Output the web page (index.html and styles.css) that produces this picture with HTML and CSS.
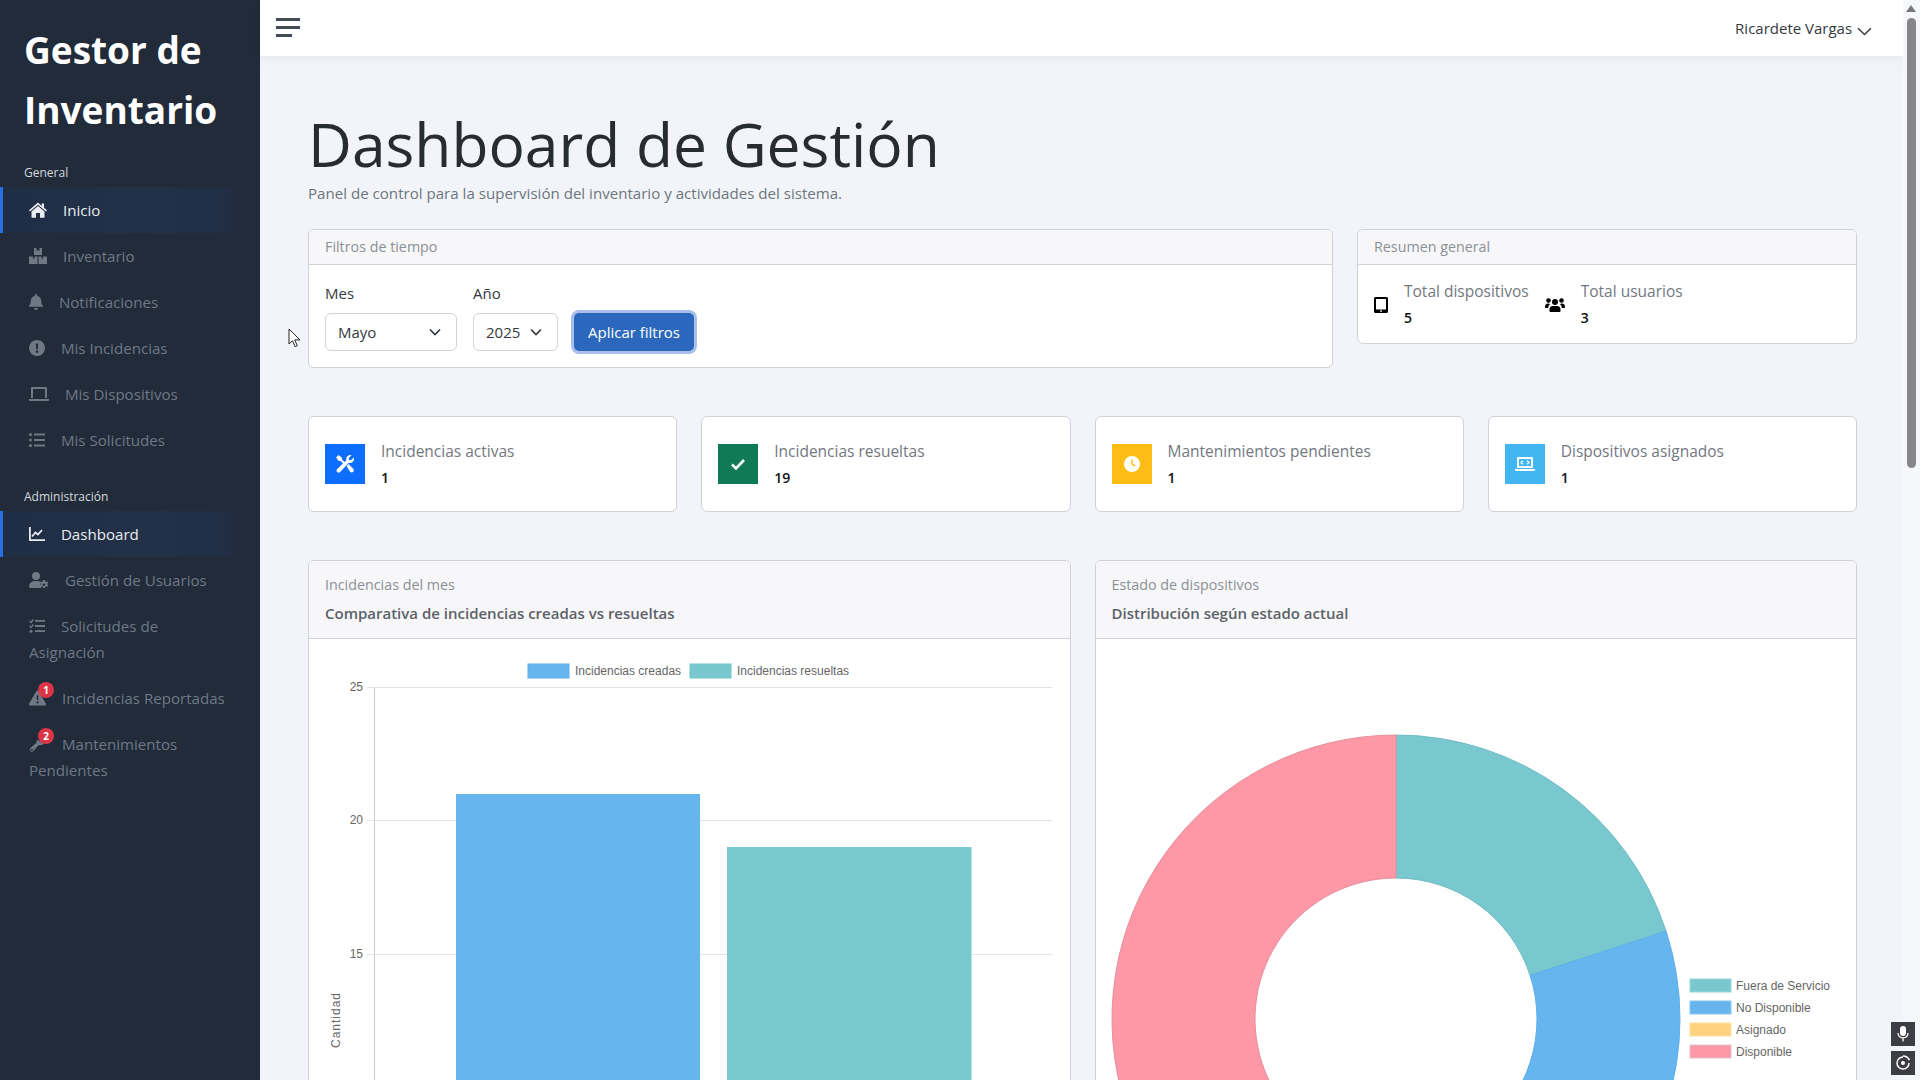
FILE: index.html
```html
<!doctype html>
<html lang="es">
<head>
<meta charset="utf-8">
<title>Dashboard de Gestión</title>
<link rel="stylesheet" href="styles.css">
</head>
<body>
<div class="app">

<aside class="sidebar">
  <div class="brand">Gestor de Inventario</div>

  <div class="nav-label">General</div>
  <a class="nav-item active"><svg class="ic" width="18" height="16" viewBox="0 0 18 16"><path d="M9 .6 0 8.2l1 1.2L9 2.7l8 6.7 1-1.2-3-2.5V1.400h-2.300v2.500z"/><path d="M9 4 2.500 9.500V15c0 .5.3.8.8.8h3.700v-4.800h4v4.800h3.700c.5 0 .8-.3.8-.8V9.500z"/></svg> Inicio</a>
  <a class="nav-item"><svg class="ic" width="18" height="16" viewBox="0 0 18 16"><path d="M5 0h2.500v2.500h3V0H13v7H5zM0 8.500h4v2h1.500v-2h3V16H0zM9.500 8.500h3v2H14v-2h4V16H9.500z"/></svg> Inventario</a>
  <a class="nav-item"><svg class="ic" width="14" height="16" viewBox="0 0 14 16"><path d="M7 0c.6 0 1 .4 1 1v.7c2.500.5 4.200 2.500 4.200 5 0 3.300 1.200 4.400 1.800 5.200v.9H0v-.9c.6-.8 1.800-1.900 1.800-5.200 0-2.500 1.700-4.500 4.200-5V1c0-.6.4-1 1-1zM5 14h4c0 1.100-.9 2-2 2s-2-.9-2-2z"/></svg> Notificaciones</a>
  <a class="nav-item"><svg class="ic" width="16" height="16" viewBox="0 0 16 16"><path fill-rule="evenodd" d="M8 0a8 8 0 1 1 0 16A8 8 0 0 1 8 0zM6.900 3.500l.3 6h1.600l.3-6zM8 10.500a1.300 1.300 0 1 0 0 2.600 1.300 1.300 0 0 0 0-2.600z"/></svg> Mis Incidencias</a>
  <a class="nav-item"><svg class="ic" width="20" height="16" viewBox="0 0 20 16"><path fill-rule="evenodd" d="M3 1h14c.6 0 1 .4 1 1v10h-2V3H4v9H2V2c0-.6.4-1 1-1zM0 13h20v1c0 .6-.5 1-1 1H1c-.5 0-1-.4-1-1z"/></svg> Mis Dispositivos</a>
  <a class="nav-item"><svg class="ic" width="16" height="16" viewBox="0 0 16 16"><circle cx="1.500" cy="2.500" r="1.500"/><circle cx="1.500" cy="8" r="1.500"/><circle cx="1.500" cy="13.500" r="1.500"/><path d="M5 1.500h11v2H5zM5 7h11v2H5zM5 12.500h11v2H5z"/></svg> Mis Solicitudes</a>

  <div class="nav-label admin">Administración</div>
  <a class="nav-item active"><svg class="ic" width="16" height="16" viewBox="0 0 16 16"><path d="M0 1h1.800v12.200H16V15H1c-.6 0-1-.4-1-1z"/><path d="m3 10.500 3.500-4 2.500 2 4-4.500" fill="none" stroke="currentColor" stroke-width="1.800"/></svg> Dashboard</a>
  <a class="nav-item"><svg class="ic" width="20" height="16" viewBox="0 0 20 16"><circle cx="7" cy="4" r="4"/><path d="M0 14.500C0 11.500 2.500 9 5.500 9h3c1 0 1.900.3 2.600.7-.5 1.800.1 3.800 1.400 5.300l-.4 1H1.500C.7 16 0 15.300 0 14.500z"/><path fill-rule="evenodd" d="m15 8 1 .1.3 1.300 1 .5 1.200-.5.8 1.100-.9 1 .1 1.100.9 1-.8 1.100-1.200-.5-1 .5-.3 1.300h-2l-.3-1.300-1-.5-1.200.5-.8-1.100.9-1-.1-1.100-.9-1 .8-1.100 1.200.5 1-.5.3-1.300zm0 3.400a1.300 1.300 0 1 0 0 2.600 1.300 1.300 0 0 0 0-2.600z"/></svg> Gestión de Usuarios</a>
  <a class="nav-item"><svg class="ic" width="16" height="16" viewBox="0 0 16 16"><path d="M6 2h10v1.800H6zM6 7.100h10v1.800H6zM6 12.200h10V14H6z"/><path d="M.5 3 2 4.500 4.500 1.500M.5 8 2 9.500l2.500-3" fill="none" stroke="currentColor" stroke-width="1.300"/><circle cx="2" cy="13.200" r="1.500"/></svg> Solicitudes de Asignación</a>
  <a class="nav-item"><span class="ic-wrap"><svg class="ic" width="17" height="16" viewBox="0 0 18 16"><path fill-rule="evenodd" d="M9 0c.5 0 1 .3 1.300.8l7.500 13c.5 1-.2 2.200-1.300 2.200h-15C.4 16-.3 14.800.2 13.800L7.700.8C8 .3 8.500 0 9 0zM8.100 5l.2 5.500h1.400L9.900 5zM9 11.500a1.200 1.200 0 1 0 0 2.400 1.200 1.200 0 0 0 0-2.400z"/></svg><span class="badge">1</span></span> Incidencias Reportadas</a>
  <a class="nav-item"><span class="ic-wrap"><svg class="ic" width="17" height="16" viewBox="0 0 18 16"><path fill-rule="evenodd" d="M13 0a5 5 0 0 1 5 5l-.1 1-3.100.8-2.300-2.100.7-3.100L13 0zM9.500 3.500 12 6l3 .5 1 .5c-1.300 2.300-3.500 2.800-5.800 2L4.700 15.400c-.9.9-2.300.9-3.200.1-.9-.9-.9-2.300 0-3.200L8 6.600c-.3-1.200 0-2.200 1.500-3.100zM3 13a1 1 0 1 0 0 2 1 1 0 0 0 0-2z"/></svg><span class="badge">2</span></span> Mantenimientos Pendientes</a>
</aside>

<div class="main">
  <header class="topbar">
    <button class="menu-btn"><span></span><span></span><span class="short"></span></button>
    <div class="user">Ricardete Vargas <svg class="user-caret" width="15" height="9" viewBox="0 0 15 9"><path d="m1 1.200 6.500 6.300L14 1.200" fill="none" stroke="currentColor" stroke-width="1.500"/></svg></div>
  </header>

  <main class="content">
    <h1 class="page-title">Dashboard de Gestión</h1>
    <p class="page-sub">Panel de control para la supervisión del inventario y actividades del sistema.</p>

    <section class="top-row">
      <div class="card">
        <div class="card-header">Filtros de tiempo</div>
        <div class="filters">
          <div class="field">
            <label>Mes</label>
            <div class="select month">Mayo <svg width="12" height="8" viewBox="0 0 12 8"><path d="m1 1.500 5 5 5-5" fill="none" stroke="#343a40" stroke-width="1.700"/></svg></div>
          </div>
          <div class="field">
            <label>Año</label>
            <div class="select year">2025 <svg width="12" height="8" viewBox="0 0 12 8"><path d="m1 1.500 5 5 5-5" fill="none" stroke="#343a40" stroke-width="1.700"/></svg></div>
          </div>
          <button class="btn-apply">Aplicar filtros</button>
        </div>
      </div>

      <div class="card">
        <div class="card-header">Resumen general</div>
        <div class="summary">
          <div class="summary-item devices">
            <svg width="14" height="16" viewBox="0 0 14 16"><path fill-rule="evenodd" d="M1.500 0h11C13.300 0 14 .7 14 1.500v13c0 .8-.7 1.500-1.500 1.500h-11C.7 16 0 15.300 0 14.500v-13C0 .7.700 0 1.500 0zM2 2v10.500h10V2zm5 11.200a.9.900 0 1 0 0 1.800.9.900 0 0 0 0-1.800z"/></svg>
            <div class="stat-text"><div class="stat-title">Total dispositivos</div><div class="stat-value">5</div></div>
          </div>
          <div class="summary-item">
            <svg width="20" height="16" viewBox="0 0 20 16"><circle cx="3.500" cy="3.500" r="2.300"/><circle cx="16.500" cy="3.500" r="2.300"/><circle cx="10" cy="5" r="3"/><path d="M0 10c0-2 1-3.500 3-3.500 1 0 1.500.3 2 .8-1 .8-1.700 2-1.800 3.700H1c-.6 0-1-.4-1-1zM20 10c0 .6-.4 1-1 1h-2.200c-.1-1.700-.8-2.900-1.800-3.700.5-.5 1-.8 2-.8 2 0 3 1.500 3 3.500zM7.500 9h5c1.500 0 3 1.500 3 3.500V14c0 .6-.4 1-1 1h-9c-.6 0-1-.4-1-1v-1.500C4.500 10.500 6 9 7.500 9z"/></svg>
            <div class="stat-text"><div class="stat-title">Total usuarios</div><div class="stat-value">3</div></div>
          </div>
        </div>
      </div>
    </section>

    <section class="stats">
      <div class="card stat-card">
        <div class="stat-icon blue"><svg width="18" height="18" viewBox="0 0 18 18"><path d="M2.500 0 6 2.800v1.700l3 3-1.500 1.500-3-3H2.800L0 2.500zM14 0c.5 0 1 .1 1.500.3l-2.700 2.700.3 2 2 .3L17.700 2.500c.2.500.3 1 .3 1.500a4 4 0 0 1-5.300 3.800L4.200 16.900a2 2 0 0 1-3-3l9.200-8.600A4 4 0 0 1 14 0z"/><path d="m10.500 11 2-2 4.700 4.700c.8.800.8 2.300 0 3.100-.9.800-2.300.8-3.100 0z"/></svg></div>
        <div class="stat-text"><div class="stat-title">Incidencias activas</div><div class="stat-value">1</div></div>
      </div>
      <div class="card stat-card">
        <div class="stat-icon green"><svg width="16" height="16" viewBox="0 0 16 16"><path d="m2 8.500 4 4 8-8.500" fill="none" stroke="#fff" stroke-width="2.600"/></svg></div>
        <div class="stat-text"><div class="stat-title">Incidencias resueltas</div><div class="stat-value">19</div></div>
      </div>
      <div class="card stat-card">
        <div class="stat-icon yellow"><svg width="16" height="16" viewBox="0 0 16 16"><path fill-rule="evenodd" d="M8 0a8 8 0 1 1 0 16A8 8 0 0 1 8 0zM7.200 3.500V8.300l3.300 2.400.9-1.200-2.700-2V3.500z"/></svg></div>
        <div class="stat-text"><div class="stat-title">Mantenimientos pendientes</div><div class="stat-value">1</div></div>
      </div>
      <div class="card stat-card">
        <div class="stat-icon sky"><svg width="20" height="16" viewBox="0 0 20 16"><path fill-rule="evenodd" d="M3 1h14c.6 0 1 .4 1 1v10H2V2c0-.6.4-1 1-1zm1 2v7h12V3zM0 13h20v1c0 .6-.5 1-1 1H1c-.5 0-1-.4-1-1z"/><path d="M8 4.800 6 6.500l2 1.700M12 4.800l2 1.700-2 1.700" fill="none" stroke="#fff" stroke-width="1.200"/></svg></div>
        <div class="stat-text"><div class="stat-title">Dispositivos asignados</div><div class="stat-value">1</div></div>
      </div>
    </section>

    <section class="charts">
      <div class="card">
        <div class="card-header chart-header">
          <div>Incidencias del mes</div>
          <div class="chart-sub">Comparativa de incidencias creadas vs resueltas</div>
        </div>
        <svg class="chart" width="760" height="460" viewBox="0 0 760 460">
          <rect x="219" y="25" width="41" height="14" fill="#66b5ee" stroke="#5cafec"/>
          <text class="chart-txt" x="266" y="36">Incidencias creadas</text>
          <rect x="381" y="25" width="41" height="14" fill="#7ac8cf" stroke="#6fc4cb"/>
          <text class="chart-txt" x="428" y="36">Incidencias resueltas</text>

          <path class="axis" d="M65.500 48v412"/>
          <path class="grid" d="M58 48.500h685M58 181.500h685M58 315.500h685"/>
          <text class="chart-txt tick" x="54" y="52">25</text>
          <text class="chart-txt tick" x="54" y="185">20</text>
          <text class="chart-txt tick" x="54" y="319">15</text>
          <text class="chart-txt axis-title" transform="translate(31 381) rotate(-90)">Cantidad</text>

          <rect x="147" y="155" width="244" height="305" fill="#66b5ee"/>
          <rect x="418" y="208" width="244.500" height="252" fill="#7ac8cf"/>
        </svg>
      </div>

      <div class="card">
        <div class="card-header chart-header">
          <div>Estado de dispositivos</div>
          <div class="chart-sub">Distribución según estado actual</div>
        </div>
        <svg class="chart" width="760" height="460" viewBox="0 0 760 460">
          <path d="M300 96A284 284 0 0 1 570.100 292.240L434.100 336.430A141 141 0 0 0 300 239Z" fill="#7ac8cf" stroke="#6fbcc4"/>
          <path d="M570.100 292.240A284 284 0 0 1 466.930 609.760L382.880 494.070A141 141 0 0 0 434.100 336.430Z" fill="#66b5ee" stroke="#5cafec"/>
          <path d="M466.930 609.760A284 284 0 1 1 300 96L300 239A141 141 0 1 0 382.880 494.070Z" fill="#fe98a6" stroke="#e58f9c"/>

          <rect x="594" y="340" width="41" height="13" fill="#7ac8cf" stroke="#9ad6da"/>
          <text class="chart-txt" x="640" y="351">Fuera de Servicio</text>
          <rect x="594" y="362" width="41" height="13" fill="#66b5ee" stroke="#8bc6f1"/>
          <text class="chart-txt" x="640" y="373">No Disponible</text>
          <rect x="594" y="384" width="41" height="13" fill="#ffd27f" stroke="#ffdf9e"/>
          <text class="chart-txt" x="640" y="395">Asignado</text>
          <rect x="594" y="406" width="41" height="13" fill="#fe98a6" stroke="#d9c3cb"/>
          <text class="chart-txt" x="640" y="417">Disponible</text>
        </svg>
      </div>
    </section>
  </main>
</div>

<div class="scrollbar">
  <svg class="scroll-arrow" width="10" height="7" viewBox="0 0 10 7"><path d="M5 0 10 7H0z"/></svg>
  <div class="scroll-thumb"></div>
</div>
</div>

<div class="float-tools">
  <div class="tool-btn"><svg width="12" height="16" viewBox="0 0 12 16"><rect x="3" y="0" width="6" height="10" rx="3" fill="#fff"/><path d="M1 7c0 3 2 4.800 5 4.800S11 10 11 7M6 12v3.500" fill="none" stroke="#fff" stroke-width="1.300"/></svg></div>
  <div class="tool-btn"><svg width="16" height="16" viewBox="0 0 16 16"><path d="M8 2a6 6 0 1 0 6 6" fill="none" stroke="#fff" stroke-width="1.500"/><path d="M8 1c3 0 5 1.500 6.500 4" fill="none" stroke="#fff" stroke-width="1.500"/><circle cx="8" cy="8" r="2" fill="#fff"/></svg></div>
</div>

<svg class="cursor" width="13" height="20" viewBox="0 0 13 20"><path d="M1 1v15l3.500-3.300 2.600 6 2.200-1-2.600-5.800H12z" fill="#fff" stroke="#222" stroke-width="1"/></svg>

</body>
</html>
```

FILE: styles.css
```css
* {
    box-sizing: border-box;
}
body {
    margin: 0;
    font-family: "Open Sans", "Noto Sans", sans-serif;
    font-size: 14px;
    color: #212529;
    background-color: #f2f4f9;
}
.app {
    display: flex;
    height: 100vh;
    overflow: hidden;
}

/* sidebar */
.sidebar {
    flex: 0 0 260px;
    background-color: #212b3a;
    color: #707886;
}
.brand {
    padding: 20px 24px 0;
    font-size: 37px;
    line-height: 60px;
    font-weight: 700;
    color: #fff;
}
.nav-label {
    margin-top: 26px;
    padding: 0 24px;
    height: 14px;
    line-height: 14px;
    font-size: 12px;
    color: #d5d8dd;
}
.nav-label.admin {
    margin-top: 27px;
}
.nav-item {
    display: block;
    padding: 10px 29px;
    line-height: 26px;
    font-size: 15.1px;
}
.nav-label + .nav-item {
    margin-top: 7px;
}
.nav-item.active {
    margin-right: 20px;
    padding-left: 26px;
    border-left: 3px solid #2b6fdc;
    color: #e9edf2;
    background: linear-gradient(90deg, #1f2e45, #223148 60%, #212f46 92%, #212b3a);
}
.ic {
    vertical-align: -2px;
    margin-right: 12px;
    fill: currentColor;
}
.ic-wrap {
    position: relative;
}
.badge {
    position: absolute;
    left: 9px;
    top: -6px;
    width: 16px;
    height: 16px;
    border-radius: 50%;
    background-color: #dc3545;
    color: #fff;
    font-size: 10px;
    line-height: 16px;
    font-weight: 700;
    text-align: center;
}

/* main area */
.main {
    flex: 1;
    min-width: 0;
}
.topbar {
    height: 56px;
    display: flex;
    justify-content: space-between;
    align-items: center;
    padding: 0 31px 0 16px;
    background-color: #fff;
    box-shadow: 0 2px 10px rgba(0, 0, 0, 0.06);
}
.menu-btn {
    display: flex;
    flex-direction: column;
    gap: 5px;
    width: 24px;
    margin-bottom: 1px;
    padding: 0;
    border: 0;
    background: none;
}
.menu-btn span {
    display: block;
    width: 24px;
    height: 3px;
    background-color: #444c56;
}
.menu-btn .short {
    width: 16px;
}
.user {
    font-size: 15px;
    color: #343a40;
}
.user-caret {
    margin-left: 1px;
    vertical-align: -2px;
}
.content {
    padding: 52px 46px 0 48px;
}
.page-title {
    margin: 0;
    font-size: 60.5px;
    line-height: 72px;
    font-weight: 400;
    color: #272c31;
}
.page-sub {
    margin: 3px 0 26px;
    font-size: 15.1px;
    line-height: 20px;
    color: #6c757d;
}

/* cards */
.card {
    background-color: #fff;
    border: 1px solid #cfd2d8;
    border-radius: 6px;
    overflow: hidden;
}
.card-header {
    height: 35px;
    padding: 0 16px;
    line-height: 33px;
    font-size: 14.3px;
    font-weight: 500;
    color: #8b9097;
    background-color: #f7f7f9;
    border-bottom: 1px solid #cfd2d8;
}
.top-row {
    display: grid;
    grid-template-columns: 1fr 500px;
    gap: 24px;
    align-items: start;
}
.filters {
    display: flex;
    align-items: flex-end;
    gap: 16px;
    padding: 18px 16px 16px;
}
.field label {
    display: block;
    margin-bottom: 10px;
    font-size: 15px;
    line-height: 20px;
    color: #343a40;
}
.select {
    display: flex;
    justify-content: space-between;
    align-items: center;
    height: 38px;
    padding: 0 15px 0 12px;
    font-size: 15px;
    color: #343a40;
    background-color: #fff;
    border: 1px solid #ced4da;
    border-radius: 6px;
}
.select.month {
    width: 132px;
}
.select.year {
    width: 85px;
}
.btn-apply {
    height: 38px;
    width: 120px;
    padding: 0;
    font-family: inherit;
    font-size: 15px;
    font-weight: 500;
    color: #fff;
    background-color: #2b68bd;
    border: 0;
    border-radius: 5px;
    box-shadow: 0 0 0 3px #a9bfe9;
}
.summary {
    display: flex;
    padding: 16px 16px 15px;
    gap: 16px;
}
.summary-item {
    display: flex;
    align-items: center;
    gap: 16px;
}
.stat-title {
    font-size: 15.5px;
    line-height: 21px;
    font-weight: 500;
    color: #73787f;
}
.stat-value {
    margin-top: 6px;
    font-size: 14px;
    line-height: 20px;
    font-weight: 600;
    color: #111;
}
.stats {
    display: grid;
    grid-template-columns: repeat(4, 1fr);
    gap: 24px;
    margin-top: 48px;
}
.stat-card {
    display: flex;
    align-items: center;
    gap: 16px;
    height: 96px;
    padding: 0 16px;
}
.stat-icon {
    flex: 0 0 40px;
    height: 40px;
    display: flex;
    align-items: center;
    justify-content: center;
    fill: #fff;
}
.stat-icon.blue {
    background-color: #0d6efd;
}
.stat-icon.green {
    background-color: #0f7a55;
}
.stat-icon.yellow {
    background-color: #fdbd14;
}
.stat-icon.sky {
    background-color: #41b6f1;
}
.charts {
    display: grid;
    grid-template-columns: 1fr 1fr;
    gap: 24px;
    margin-top: 48px;
}
.chart-header {
    height: 78px;
    padding-top: 10px;
    line-height: 28px;
}
.chart-sub {
    font-size: 15px;
    font-weight: 600;
    color: #5c6168;
}
.chart {
    display: block;
}
.chart-txt {
    font-family: "Liberation Sans", Arial, sans-serif;
    font-size: 12px;
    fill: #666;
}
.tick {
    text-anchor: end;
}
.axis-title {
    text-anchor: middle;
    letter-spacing: 1px;
}
.axis {
    stroke: #c9cbcf;
    fill: none;
}
.grid {
    stroke: #e3e4e6;
    fill: none;
}

/* fake scrollbar */
.scrollbar {
    flex: 0 0 17px;
    position: relative;
    background-color: #f6f7fa;
}
.scroll-arrow {
    display: block;
    margin: 5px 0 0 3px;
    fill: #77777c;
}
.scroll-thumb {
    width: 9px;
    height: 450px;
    margin: 6px 0 0 4px;
    border-radius: 5px;
    background-color: #85858a;
}

/* overlays */
.float-tools {
    position: fixed;
    right: 5px;
    bottom: 5px;
    display: flex;
    flex-direction: column;
    gap: 5px;
}
.tool-btn {
    width: 24px;
    height: 24px;
    display: flex;
    align-items: center;
    justify-content: center;
    background-color: #3d3d45;
}
.cursor {
    position: fixed;
    left: 288px;
    top: 328px;
}
```
